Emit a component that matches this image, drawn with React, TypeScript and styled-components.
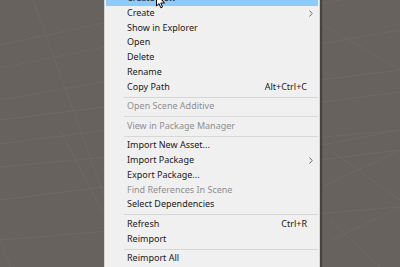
import React from "react";
import styled, { createGlobalStyle } from "styled-components";

type MenuEntry =
  | { kind: "item"; label: string; shortcut?: string; submenu?: boolean; disabled?: boolean; active?: boolean }
  | { kind: "sep" };

const entries: MenuEntry[] = [
  { kind: "item", label: "Create New", active: true },
  { kind: "item", label: "Create", submenu: true },
  { kind: "item", label: "Show in Explorer" },
  { kind: "item", label: "Open" },
  { kind: "item", label: "Delete" },
  { kind: "item", label: "Rename" },
  { kind: "item", label: "Copy Path", shortcut: "Alt+Ctrl+C" },
  { kind: "sep" },
  { kind: "item", label: "Open Scene Additive", disabled: true },
  { kind: "sep" },
  { kind: "item", label: "View in Package Manager", disabled: true },
  { kind: "sep" },
  { kind: "item", label: "Import New Asset..." },
  { kind: "item", label: "Import Package", submenu: true },
  { kind: "item", label: "Export Package..." },
  { kind: "item", label: "Find References In Scene", disabled: true },
  { kind: "item", label: "Select Dependencies" },
  { kind: "sep" },
  { kind: "item", label: "Refresh", shortcut: "Ctrl+R" },
  { kind: "item", label: "Reimport" },
  { kind: "sep" },
  { kind: "item", label: "Reimport All" },
  { kind: "sep" },
];

// faint perspective grid of the scene view
const gridLines: [number, number, number, number][] = [
  [0, 45, 400, -40],
  [0, 68, 400, -12],
  [0, 100, 400, 30],
  [0, 120, 400, 70],
  [0, 144, 400, 92],
  [0, 167, 400, 130],
  [0, 200, 400, 150],
  [0, 240, 400, 207],
  [33, 0, 130, 267],
  [60, 130, 103, 213],
  [-10, 210, 10, 267],
  [280, 0, 400, 70],
  [322, 145, 400, 130],
  [330, 150, 400, 200],
  [322, 187, 400, 150],
  [333, 240, 400, 207],
  [330, 220, 380, 267],
];

const App = () => {
  return (
    <>
      <GlobalStyle />
      <SceneView>
        <Grid width={400} height={267} viewBox="0 0 400 267">
          {gridLines.map(([x1, y1, x2, y2], i) => (
            <line key={i} x1={x1} y1={y1} x2={x2} y2={y2} stroke="#767474" strokeWidth={1} strokeOpacity={0.4} />
          ))}
        </Grid>
        <Menu>
          {entries.map((e, i) =>
            e.kind === "sep" ? (
              <Separator key={i} />
            ) : (
              <Item key={i} $active={e.active} $disabled={e.disabled}>
                <Label>{e.label}</Label>
                {e.shortcut && <Shortcut>{e.shortcut}</Shortcut>}
                <ArrowCell>
                  {e.submenu && (
                    <svg width="4" height="7" viewBox="0 0 4 7">
                      <path d="M0.5 0.5 L3.2 3.5 L0.5 6.5" fill="none" stroke="#6a6a6a" strokeWidth="1" />
                    </svg>
                  )}
                </ArrowCell>
              </Item>
            )
          )}
        </Menu>
        <Cursor width="10" height="15" viewBox="0 0 10 15">
          <path d="M0.5 0.5 L0.5 12 L3 9.6 L4.8 13.8 L6.5 13 L4.8 9 L8.5 9 Z" fill="#fff" stroke="#000" strokeWidth="1" strokeLinejoin="round" />
        </Cursor>
      </SceneView>
    </>
  );
};

export default App;

const GlobalStyle = createGlobalStyle`
  body {
    margin: 0;
    background: #67625e;
  }
`;

const SceneView = styled.div`
  position: relative;
  width: 400px;
  height: 267px;
  overflow: hidden;
  background: #67625e;
`;

const Grid = styled.svg`
  display: block;
`;

const Menu = styled.div`
  position: absolute;
  left: 104px;
  top: -12px;
  width: 216px;
  box-sizing: border-box;
  padding: 2px 1px;
  background: #f0f0f0;
  border: 1px solid #d4d4d4;
  box-shadow: 2px 2px 1px rgba(30, 28, 26, 0.45);
  font-family: "Noto Sans", "Open Sans", sans-serif;
  font-size: 9px;
`;

const Item = styled.div<{ $active?: boolean; $disabled?: boolean }>`
  display: flex;
  align-items: center;
  height: 14.8px;
  line-height: 14.8px;
  padding-left: 21px;
  color: ${(p) => (p.$disabled ? "#8f8f8f" : "#1a1a1a")};
  background: ${(p) => (p.$active ? "#91c9f7" : "transparent")};
  white-space: nowrap;
`;

const Label = styled.span`
  flex: 1;
`;

const Shortcut = styled.span`
  color: #1a1a1a;
`;

const ArrowCell = styled.span`
  width: 11px;
  display: flex;
  align-items: center;
  padding-left: 2px;
  box-sizing: border-box;
`;

const Separator = styled.div`
  height: 1px;
  margin: 2px 0 1.7px 18px;
  background: #d7d7d7;
`;

const Cursor = styled.svg`
  position: absolute;
  left: 156px;
  top: -6px;
`;
